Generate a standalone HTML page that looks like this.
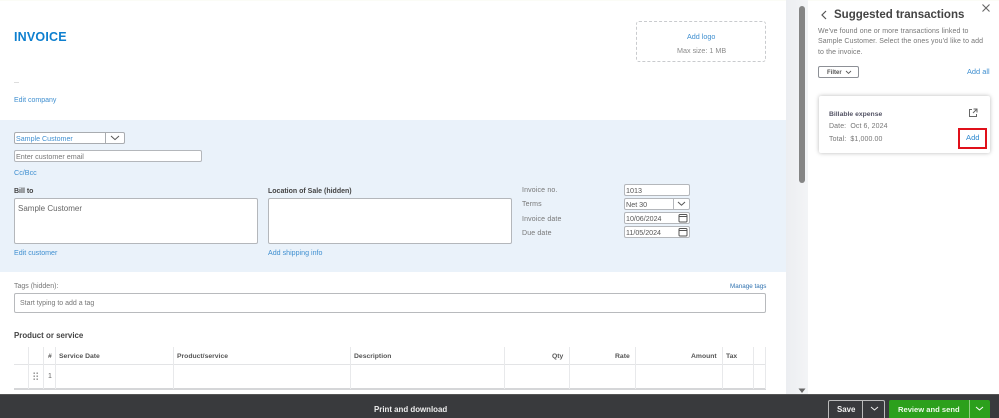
<!DOCTYPE html>
<html>
<head>
<meta charset="utf-8">
<style>
html,body{margin:0;padding:0;background:#fff;}
body{position:relative;width:999px;height:418px;overflow:hidden;font-family:"Liberation Sans",sans-serif;color:#444;}
#w{position:absolute;left:0;top:0;width:999px;height:418px;background:#fff;overflow:hidden;filter:blur(.3px);}
.a{position:absolute;white-space:nowrap;}
.b{position:absolute;box-sizing:border-box;background:#fff;border:1px solid #b4b7bb;border-radius:2px;}
.link{color:#3f8fd0;font-size:7px;line-height:10px;}
.lab{color:#777;font-size:7px;line-height:10px;letter-spacing:.15px;}
.hd{color:#444;font-size:7px;font-weight:bold;line-height:10px;}
.th{color:#555;font-size:6.8px;font-weight:bold;line-height:10px;}
.v{position:absolute;width:1px;background:#e8e9eb;}
</style>
</head>
<body>
<div id="w">
<div class="a" style="left:0;top:0;width:999px;height:1px;background:#fbfcf6"></div>

<!-- invoice header -->
<div class="a" style="left:14px;top:29px;font-size:12.5px;line-height:16px;font-weight:bold;color:#0d7fcf;letter-spacing:.2px">INVOICE</div>
<div class="a" style="left:14px;top:82px;width:5px;height:1px;background:#ddd"></div>
<div class="a link" style="left:14px;top:96px;font-size:7px">Edit company</div>
<div class="a" style="left:636px;top:21px;width:130px;height:41px;box-sizing:border-box;border:1px dashed #c9cbce;border-radius:3px"></div>
<div class="a link" style="left:687px;top:32px;font-size:7.2px">Add logo</div>
<div class="a" style="left:677px;top:46px;font-size:7.2px;line-height:10px;color:#8b8b8b">Max size: 1 MB</div>

<!-- blue section -->
<div class="a" style="left:0;top:120px;width:786px;height:152px;background:#eaf2fa"></div>

<div class="b" style="left:14px;top:132px;width:111px;height:12px;border-color:#a9acb0"></div>
<div class="a" style="left:105px;top:132px;width:1px;height:12px;background:#a9acb0"></div>
<div class="a" style="left:16px;top:134px;font-size:7.1px;line-height:10px;color:#3f8fd0">Sample Customer</div>
<svg class="a" style="left:110px;top:135px" width="10" height="6" viewBox="0 0 10 6"><path d="M1 1l4 3.6L9 1" fill="none" stroke="#555" stroke-width="1"/></svg>

<div class="b" style="left:14px;top:150px;width:188px;height:12px;border-color:#b4b7bb"></div>
<div class="a" style="left:16px;top:152px;font-size:7.2px;line-height:10px;color:#777">Enter customer email</div>
<div class="a link" style="left:14px;top:168px;font-size:7.2px">Cc/Bcc</div>

<div class="a hd" style="left:14px;top:187px">Bill to</div>
<div class="a hd" style="left:268px;top:187px">Location of Sale (hidden)</div>
<div class="b" style="left:14px;top:198px;width:244px;height:46px"></div>
<div class="a" style="left:18px;top:203px;font-size:8px;line-height:12px;color:#666">Sample Customer</div>
<div class="b" style="left:268px;top:198px;width:244px;height:46px"></div>
<div class="a link" style="left:14px;top:248px;font-size:7.1px">Edit customer</div>
<div class="a link" style="left:268px;top:248px;font-size:7.1px">Add shipping info</div>

<!-- invoice meta -->
<div class="a lab" style="left:522px;top:186px">Invoice no.</div>
<div class="a lab" style="left:522px;top:200px">Terms</div>
<div class="a lab" style="left:522px;top:215px">Invoice date</div>
<div class="a lab" style="left:522px;top:229px">Due date</div>
<div class="b" style="left:624px;top:184px;width:66px;height:12px"></div>
<div class="a" style="left:626px;top:186px;font-size:7.2px;line-height:10px;color:#555">1013</div>
<div class="b" style="left:624px;top:198px;width:66px;height:12px"></div>
<div class="a" style="left:673px;top:198px;width:1px;height:12px;background:#b4b7bb"></div>
<div class="a" style="left:626px;top:200px;font-size:7.2px;line-height:10px;color:#555">Net 30</div>
<svg class="a" style="left:677px;top:201px" width="9" height="6" viewBox="0 0 9 6"><path d="M1 1l3.5 3.2L8 1" fill="none" stroke="#555" stroke-width="1"/></svg>
<div class="b" style="left:624px;top:212px;width:66px;height:12px"></div>
<div class="a" style="left:626px;top:214px;font-size:7.1px;line-height:10px;color:#555">10/06/2024</div>
<svg class="a" style="left:678px;top:213px" width="10" height="10" viewBox="0 0 10 10"><rect x="1" y="1.5" width="8" height="7.5" rx="1" fill="none" stroke="#555" stroke-width="1"/><path d="M1 3.5h8" stroke="#555" stroke-width="1"/></svg>
<div class="b" style="left:624px;top:226px;width:66px;height:12px"></div>
<div class="a" style="left:626px;top:228px;font-size:7.1px;line-height:10px;color:#555">11/05/2024</div>
<svg class="a" style="left:678px;top:227px" width="10" height="10" viewBox="0 0 10 10"><rect x="1" y="1.5" width="8" height="7.5" rx="1" fill="none" stroke="#555" stroke-width="1"/><path d="M1 3.5h8" stroke="#555" stroke-width="1"/></svg>

<!-- tags -->
<div class="a" style="left:14px;top:282px;font-size:7px;line-height:10px;color:#777">Tags (hidden):</div>
<div class="a" style="left:730px;top:282px;font-size:6.3px;line-height:10px;color:#2f72b0">Manage tags</div>
<div class="b" style="left:14px;top:293px;width:752px;height:20px;border-color:#b8babd"></div>
<div class="a" style="left:20px;top:299px;font-size:7px;line-height:10px;color:#777">Start typing to add a tag</div>

<!-- table -->
<div class="a" style="left:14px;top:331px;font-size:7.9px;line-height:10px;font-weight:bold;color:#444">Product or service</div>
<div class="a" style="left:14px;top:364px;width:752px;height:1px;background:#e3e4e6"></div>
<div class="a" style="left:14px;top:388px;width:752px;height:2px;background:#d5d6d8"></div>
<div class="v" style="left:28px;top:347px;height:42px"></div>
<div class="v" style="left:43px;top:347px;height:42px"></div>
<div class="v" style="left:55px;top:347px;height:42px"></div>
<div class="v" style="left:173px;top:347px;height:42px"></div>
<div class="v" style="left:350px;top:347px;height:42px"></div>
<div class="v" style="left:504px;top:347px;height:42px"></div>
<div class="v" style="left:569px;top:347px;height:42px"></div>
<div class="v" style="left:635px;top:347px;height:42px"></div>
<div class="v" style="left:722px;top:347px;height:42px"></div>
<div class="v" style="left:753px;top:347px;height:42px"></div>
<div class="v" style="left:765px;top:347px;height:42px"></div>
<div class="a th" style="left:48px;top:352px">#</div>
<div class="a th" style="left:59px;top:352px">Service Date</div>
<div class="a th" style="left:177px;top:352px">Product/service</div>
<div class="a th" style="left:354px;top:352px">Description</div>
<div class="a th" style="left:552px;top:352px">Qty</div>
<div class="a th" style="left:615px;top:352px">Rate</div>
<div class="a th" style="left:691px;top:352px">Amount</div>
<div class="a th" style="left:726px;top:352px">Tax</div>
<svg class="a" style="left:33px;top:372px" width="6" height="9" viewBox="0 0 6 9"><g fill="#888"><rect x="0.5" y="0.5" width="1.4" height="1.4"/><rect x="3.5" y="0.5" width="1.4" height="1.4"/><rect x="0.5" y="3.5" width="1.4" height="1.4"/><rect x="3.5" y="3.5" width="1.4" height="1.4"/><rect x="0.5" y="6.5" width="1.4" height="1.4"/><rect x="3.5" y="6.5" width="1.4" height="1.4"/></g></svg>
<div class="a" style="left:48px;top:372px;font-size:7px;line-height:10px;color:#666">1</div>

<!-- scrollbar -->
<div class="a" style="left:786px;top:0;width:22px;height:394px;background:linear-gradient(to right,#eceef1,#f3f4f6)"></div>
<div class="a" style="left:799px;top:6px;width:6px;height:177px;background:#858585;border-radius:3px"></div>
<svg class="a" style="left:798px;top:388px" width="8" height="6" viewBox="0 0 8 6"><path d="M0.5 0.5h7L4 5z" fill="#666"/></svg>

<!-- right panel -->
<svg class="a" style="left:820px;top:10px" width="8" height="10" viewBox="0 0 8 10"><path d="M6 1L2 5l4 4" fill="none" stroke="#555" stroke-width="1.2"/></svg>
<div class="a" style="left:834px;top:8px;font-size:11.5px;line-height:15px;font-weight:bold;color:#444">Suggested transactions</div>
<svg class="a" style="left:981px;top:3px" width="10" height="10" viewBox="0 0 10 10"><path d="M1.5 1.5l7 7M8.5 1.5l-7 7" stroke="#666" stroke-width="1.1"/></svg>
<div class="a" style="left:818px;top:25px;font-size:7px;line-height:10.4px;color:#777;letter-spacing:.1px;padding-top:2px">We've found one or more transactions linked to<br>Sample Customer. Select the ones you'd like to add<br>to the invoice.</div>
<div class="b" style="left:818px;top:66px;width:41px;height:12px;border-color:#8d9096;border-radius:2px"></div>
<div class="a" style="left:827px;top:68px;font-size:6px;line-height:10px;font-weight:bold;color:#555">Filter</div>
<svg class="a" style="left:845px;top:70px" width="7" height="5" viewBox="0 0 7 5"><path d="M1 1l2.5 2.4L6 1" fill="none" stroke="#555" stroke-width=".9"/></svg>
<div class="a" style="left:967px;top:67px;font-size:7.4px;line-height:10px;color:#3f8fd0">Add all</div>

<div class="a" style="left:819px;top:96px;width:171px;height:57px;background:#fff;border-radius:2px;box-shadow:0 0 4px rgba(0,0,0,.28)"></div>
<div class="a" style="left:829px;top:110px;font-size:6.8px;line-height:10px;font-weight:bold;color:#556">Billable expense</div>
<div class="a" style="left:829px;top:122px;font-size:7px;line-height:10px;color:#777;letter-spacing:.1px">Date:&nbsp; Oct 6, 2024</div>
<div class="a" style="left:829px;top:135px;font-size:7px;line-height:10px;color:#777;letter-spacing:.1px">Total:&nbsp; $1,000.00</div>
<svg class="a" style="left:968px;top:108px" width="10" height="10" viewBox="0 0 10 10"><path d="M4 1.5H1.5v7h7V6M5.5 1h3.5v3.5M9 1L5 5" fill="none" stroke="#666" stroke-width="1"/></svg>
<div class="a" style="left:958px;top:128px;width:29px;height:21px;box-sizing:border-box;border:2px solid #e0101a"></div>
<div class="a" style="left:966px;top:133px;font-size:7.6px;line-height:10px;color:#2f8ad0">Add</div>

<!-- footer -->
<div class="a" style="left:0;top:394px;width:999px;height:24px;background:#393a3d"></div>
<div class="a" style="left:0;top:394px;width:999px;height:1px;background:#555"></div>
<div class="a" style="left:374px;top:404px;font-size:7.9px;line-height:11px;font-weight:bold;color:#eee">Print and download</div>
<div class="a" style="left:828px;top:400px;width:57px;height:18px;box-sizing:border-box;border:1px solid #bbb;border-bottom:0;border-radius:2px 2px 0 0"></div>
<div class="a" style="left:862px;top:400px;width:1px;height:18px;background:#bbb"></div>
<div class="a" style="left:837px;top:404px;font-size:7.9px;line-height:11px;font-weight:bold;color:#f2f2f2">Save</div>
<svg class="a" style="left:870px;top:406px" width="9" height="6" viewBox="0 0 9 6"><path d="M1 1l3.5 3L8 1" fill="none" stroke="#eee" stroke-width="1"/></svg>
<div class="a" style="left:889px;top:400px;width:101px;height:18px;background:#2ca01c;border-radius:2px 2px 0 0"></div>
<div class="a" style="left:969px;top:400px;width:1px;height:18px;background:#8fd080"></div>
<div class="a" style="left:898px;top:404px;font-size:7.6px;line-height:11px;font-weight:bold;color:#eef9ea">Review and send</div>
<svg class="a" style="left:975px;top:406px" width="9" height="6" viewBox="0 0 9 6"><path d="M1 1l3.5 3L8 1" fill="none" stroke="#fff" stroke-width="1"/></svg>
</div>
</body>
</html>
